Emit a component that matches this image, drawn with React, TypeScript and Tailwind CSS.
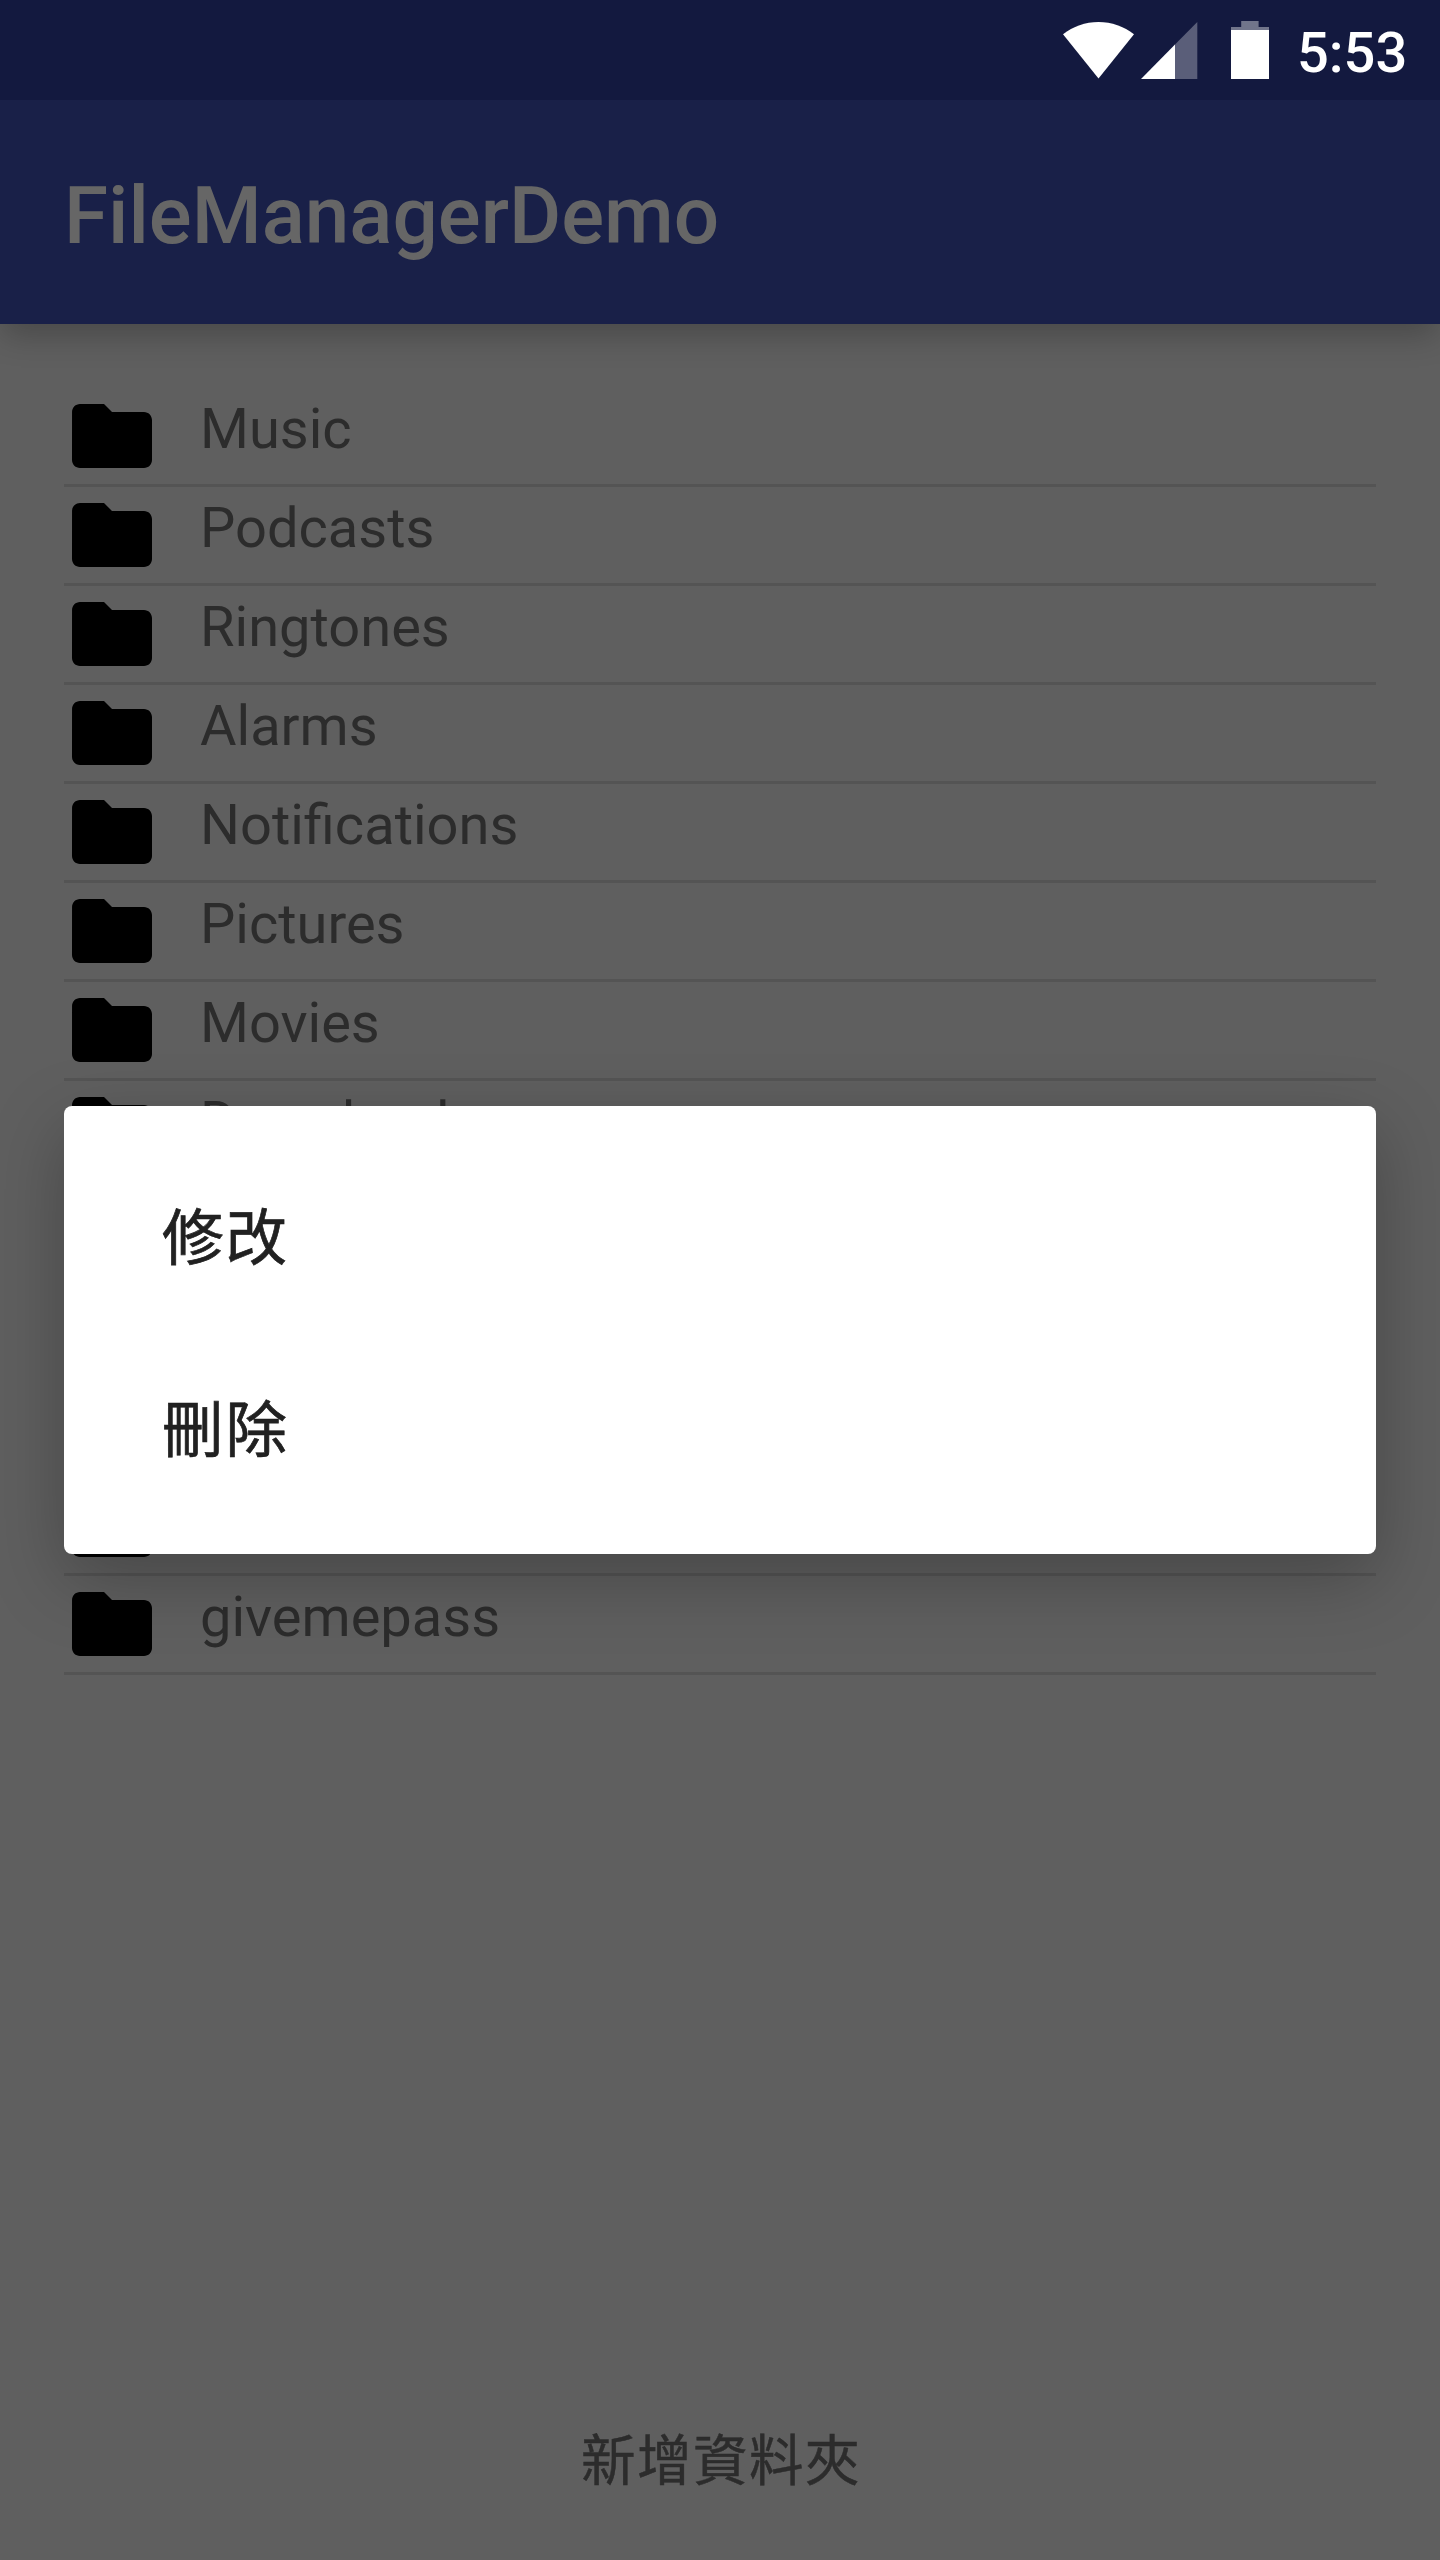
const folders = [
  'Music',
  'Podcasts',
  'Ringtones',
  'Alarms',
  'Notifications',
  'Pictures',
  'Movies',
  'Download',
  '',
  '',
  '',
  '',
  'givemepass',
];

function StatusBar() {
  return (
    <div className="relative z-10 flex h-[100px] shrink-0 items-start bg-[#13193f] pl-[1063px] text-white">
      <svg className="mt-[21px] h-[58px] w-[72px] shrink-0" viewBox="0 0 72 58" fill="currentColor">
        <path d="M0 13.3C10 5.4 22.4 1 35.5 1S61 5.400 71 13.300L35.500 57.500Z" />
      </svg>
      <svg className="ml-[5px] mt-[21px] h-[58px] w-[58px] shrink-0" viewBox="0 0 58 58" fill="currentColor">
        <path d="M35 23.600L57.300 1V58H35Z" fillOpacity="0.3" />
        <path d="M1 58L35 23.600V58Z" />
      </svg>
      <svg className="ml-[33px] mt-[21px] h-[58px] w-[38px] shrink-0" viewBox="0 0 38 58" fill="currentColor">
        <path d="M10.200 0H27.600V6H38V9H0V6H10.200Z" fillOpacity="0.4" />
        <path d="M0 9H38V58H0Z" />
      </svg>
      <span className="ml-[28px] mt-[20px] text-[56px] leading-[66px] font-medium">5:53</span>
    </div>
  );
}

function FolderRow({ name }: { name: string }) {
  return (
    <li className="flex h-[99px] shrink-0 items-start border-b-[3px] border-[#545454]">
      <svg className="size-24 shrink-0 text-black" viewBox="0 0 24 24" fill="currentColor">
        <path d="M10 4H4c-1.100 0-1.990.9-1.990 2L2 18c0 1.100.9 2 2 2h16c1.100 0 2-.9 2-2V8c0-1.100-.9-2-2-2h-8l-2-2z" />
      </svg>
      <span className="ml-10 mt-2 text-[56px] leading-[66px] text-[#2c2c2c]">{name}</span>
    </li>
  );
}

export default function App() {
  return (
    <div className="relative flex h-[2560px] w-[1440px] flex-col overflow-hidden bg-[#5f5f5f] font-['Roboto','Noto_Sans_CJK_TC',sans-serif]">
      <StatusBar />
      <header className="flex h-56 shrink-0 items-center bg-[#192048] px-16 pt-2 shadow-[0_14px_30px_-3px_rgba(0,0,0,0.24)]">
        <h1 className="text-[80px] leading-[94px] font-medium text-[#666666]">FileManagerDemo</h1>
      </header>
      <ul className="flex flex-1 flex-col px-16 pt-16">
        {folders.map((name, i) => (
          <FolderRow key={i} name={name} />
        ))}
      </ul>
      <button className="h-[192px] shrink-0 pb-[7px] pl-[2px] text-[54.5px] leading-[80px] tracking-[1.500px] text-[#2c2c2c] [-webkit-text-stroke:0.5px]">
        新增資料夾
      </button>

      <div className="absolute left-16 top-[1106px] flex h-[448px] w-[1312px] flex-col rounded-lg bg-white py-8 text-[61.5px] tracking-[2px] text-[#212121] shadow-[0_24px_72px_rgba(0,0,0,0.26)] [-webkit-text-stroke:0.7px]">
        <div className="flex h-48 items-center pl-[98px] pt-[10px]">修改</div>
        <div className="flex h-48 items-center pl-[98px] pt-[10px]">刪除</div>
      </div>
    </div>
  );
}
